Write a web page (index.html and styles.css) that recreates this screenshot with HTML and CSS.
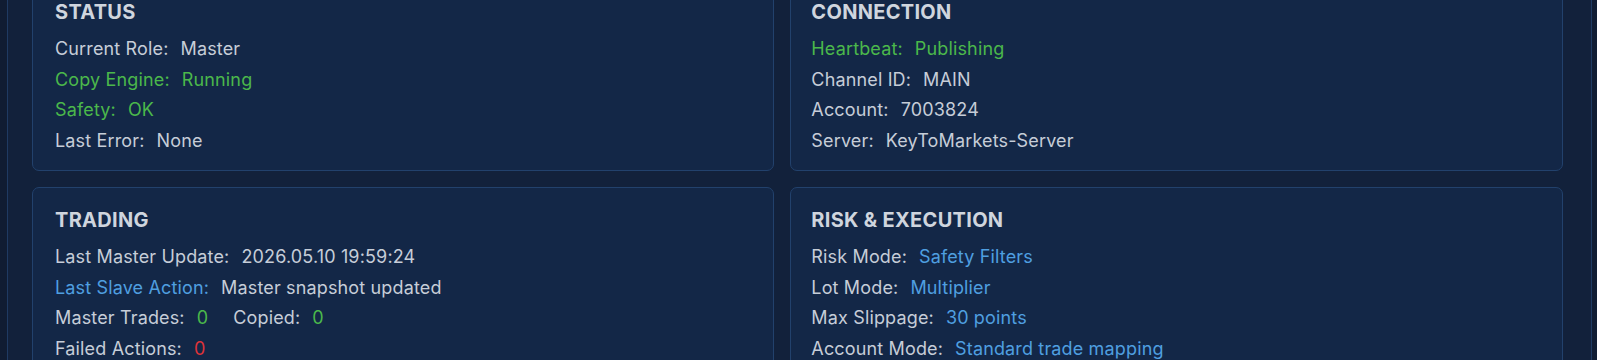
FILE: index.html
```html
<!DOCTYPE html>
<html lang="en">
<head>
    <meta charset="UTF-8">
    <meta name="viewport" content="width=device-width, initial-scale=1.0">
    <title>Copier Dashboard</title>
    <link rel="stylesheet" href="styles.css">
</head>
<body>
    <div class="panel">
        <div class="grid">
            <div class="card">
                <h2>STATUS</h2>
                <div class="row"><span>Current Role:</span><span>Master</span></div>
                <div class="row ok"><span>Copy Engine:</span><span>Running</span></div>
                <div class="row ok"><span>Safety:</span><span>OK</span></div>
                <div class="row"><span>Last Error:</span><span>None</span></div>
            </div>
            <div class="card">
                <h2>CONNECTION</h2>
                <div class="row ok"><span>Heartbeat:</span><span>Publishing</span></div>
                <div class="row"><span>Channel ID:</span><span>MAIN</span></div>
                <div class="row"><span>Account:</span><span>7003824</span></div>
                <div class="row"><span>Server:</span><span>KeyToMarkets-Server</span></div>
            </div>
            <div class="card">
                <h2>TRADING</h2>
                <div class="row"><span>Last Master Update:</span><span>2026.05.10 19:59:24</span></div>
                <div class="row"><span class="info">Last Slave Action:</span><span>Master snapshot updated</span></div>
                <div class="row">
                    <span>Master Trades:</span><span class="ok">0</span>
                    <span class="pair">Copied:</span><span class="ok">0</span>
                </div>
                <div class="row"><span>Failed Actions:</span><span class="bad">0</span></div>
            </div>
            <div class="card">
                <h2>RISK &amp; EXECUTION</h2>
                <div class="row"><span>Risk Mode:</span><span class="info">Safety Filters</span></div>
                <div class="row"><span>Lot Mode:</span><span class="info">Multiplier</span></div>
                <div class="row"><span>Max Slippage:</span><span class="info">30 points</span></div>
                <div class="row"><span>Account Mode:</span><span class="info">Standard trade mapping</span></div>
            </div>
        </div>
    </div>
</body>
</html>
```

FILE: styles.css
```css
body {
    margin: 0;
    background-color: #101c32;
    font-family: 'Inter', 'Liberation Sans', sans-serif;
    color: #c6cdd8;
    overflow: hidden;
}

.panel {
    margin: -45px 5px 0 7px;
    padding: 24px 28px 24px 24px;
    background-color: #12213b;
    border-left: 1px solid #1f3a62;
    border-right: 1px solid #1f3a62;
}

.grid {
    display: grid;
    grid-template-columns: 49fr 51fr;
    gap: 16px;
}

.card {
    padding: 20px 22px 14px;
    background-color: #132747;
    border: 1px solid #22416c;
    border-radius: 7px;
}

.card:nth-child(even) {
    padding-left: 20px;
}

h2 {
    margin: 0 0 10px;
    font-size: 20px;
    line-height: 24px;
    font-weight: 700;
    letter-spacing: 0.3px;
    color: #cfd5de;
}

.row {
    display: flex;
    gap: 12px;
    font-size: 18px;
    line-height: 30.5px;
    letter-spacing: 0.15px;
    white-space: nowrap;
}

.row .pair {
    margin-left: 13px;
}

.ok {
    color: #4bb84b;
}

.info {
    color: #4f9fe0;
}

.bad {
    color: #dc3339;
}
```
